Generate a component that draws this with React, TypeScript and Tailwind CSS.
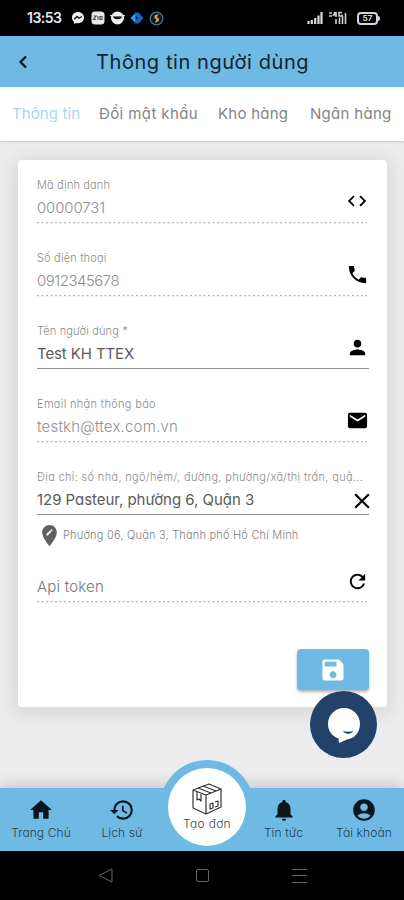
import React from 'react';
import {
    MdAccountCircle,
    MdClose,
    MdCode,
    MdEditLocation,
    MdEmail,
    MdHistory,
    MdHome,
    MdNotifications,
    MdPerson,
    MdPhone,
    MdRefresh,
    MdSave,
} from 'react-icons/md';

interface FieldProps {
    label?: string;
    labelClass?: string;
    value: string;
    valueClass?: string;
    icon: React.ReactNode;
    editable?: boolean;
    className?: string;
}

const StatusBar = () => (
    <div className="h-9 shrink-0 bg-black flex items-center text-white">
        <span className="ml-[27px] w-[35px] whitespace-nowrap text-[14px] leading-none font-semibold tracking-[-0.5px] text-gray-200">13:53</span>
        <svg className="ml-[9px]" width="14" height="14" viewBox="0 0 14 14">
            <path d="M7 1C3.400 1 1 3.400 1 6.600c0 1.800.8 3.300 2 4.300V13l2-1.100c.6.2 1.300.3 2 .3 3.600 0 6-2.500 6-5.600S10.600 1 7 1z" fill="#eee" />
            <path d="M3.300 8.300L6 5.500l2 1.700 2.700-1.700" stroke="#111" strokeWidth="1.300" fill="none" />
        </svg>
        <svg className="ml-[6px]" width="14" height="14" viewBox="0 0 14 14">
            <rect x="0.500" y="0.500" width="13" height="13" rx="3.500" fill="#e8e8e8" />
            <path d="M2.500 5H5L2.500 8.500H5M7 5v3.800M9 5.500h2v3H9z" stroke="#555" strokeWidth="1.200" fill="none" />
        </svg>
        <svg className="ml-[5px]" width="15" height="14" viewBox="0 0 15 14">
            <circle cx="7.500" cy="7" r="6.500" fill="#eee" />
            <path d="M3 5.200h9c0 2-1.800 3-4.500 3S3 7.200 3 5.200z" fill="#111" />
            <rect x="0" y="4" width="15" height="1.300" rx=".6" fill="#eee" />
        </svg>
        <svg className="ml-[5px]" width="14" height="14" viewBox="0 0 14 14">
            <path d="M4.500 1.500L8.500 1.500l5 5.500-5 5.500h-4z" fill="#1467c8" />
            <path d="M.500 7l4-4L8 7l-3.500 4z" fill="#2ba2ef" />
            <path d="M5.500 4.500L8.500 7l-3 2.500z" fill="#062044" />
        </svg>
        <svg className="ml-[5px]" width="15" height="15" viewBox="0 0 15 15">
            <circle cx="7.500" cy="7.500" r="6.300" fill="#101820" stroke="#3f7893" strokeWidth="1.300" />
            <path d="M9.500 3L5.500 4.500v3.300h2L6 12l3.800-2V6.800h-2z" fill="#d9a83b" />
        </svg>
        <svg className="ml-auto" width="16" height="13" viewBox="0 0 16 13">
            <path d="M1.500 9v3M4.800 8v4M8.200 6v6M11.500 3.500V12M14.500 0v12" stroke="#ddd" strokeWidth="2.200" />
        </svg>
        <svg className="ml-[5px]" width="20" height="14" viewBox="0 0 20 14">
            <path d="M1 2h3M1 5h3M7 1L5.500 4H9M8 1v5M14 1.500h-3V5h3V3.500M8 8v5M11.500 6.500V13M14.500 5v8M17.500 2v11" stroke="#d0d0d0" strokeWidth="1.600" fill="none" />
        </svg>
        <div className="relative ml-[9px] mr-[26px] flex h-[13px] w-[21px] items-center justify-center rounded-[4px] border-2 border-gray-300 text-[8px] font-bold leading-none text-gray-300">
            57
            <span className="absolute -right-[4px] top-[2px] h-[5px] w-[2px] rounded-r bg-gray-300" />
        </div>
    </div>
);

const Field = ({ label, labelClass = 'tracking-[0.14px]', value, valueClass = '', icon, editable = false, className = '' }: FieldProps) => (
    <div className={`flex h-[45px] shrink-0 flex-col ${editable ? 'border-b border-[#929292]' : ''} ${className}`}>
        <div className={`h-[15px] whitespace-nowrap text-[11px] font-light leading-[15px] text-[#8c8c8c] ${labelClass}`}>{label}</div>
        <div className="flex h-[29px] justify-between">
            <span className={`whitespace-nowrap text-[15px] leading-[30px] ${editable ? 'text-[#5a5a5a]' : 'font-light text-[#8f8f8f]'} ${valueClass}`}>{value}</span>
            <span className="text-black">{icon}</span>
        </div>
        {!editable && (
            <svg className="h-[2px] w-full shrink-0" width="331" height="2">
                <path d="M0 .500H330" stroke="#b5b5b5" strokeWidth="1.300" strokeDasharray="2 2.500" />
            </svg>
        )}
    </div>
);

const NavItem = ({ label, icon, className }: { label: string; icon: React.ReactNode; className: string }) => (
    <div className={`flex flex-col items-center pt-[9px] text-[#0b151c] ${className}`}>
        {icon}
        <span className="mt-px whitespace-nowrap text-[12px] font-light leading-[18px] tracking-[0.1px] text-[#1f3e50]">{label}</span>
    </div>
);

const BoxIcon = () => (
    <svg width="32" height="34" viewBox="0 0 32 34" fill="none" stroke="#333" strokeWidth="1.200" strokeLinejoin="round">
        <path d="M2 8L18 2l12 5v18L15 32 2 26zM2 8l13 5 15-6M15 13v19" />
        <path d="M7 6l13 5M12 4l13 5M6 10v8l2-1 2 2v-7" />
        <path d="M19 22l3-1v5l-3 1zM24 20l3-1v5l-3 1" />
    </svg>
);

export default function App() {
    return (
        <div className="flex h-[900px] w-[404px] flex-col overflow-hidden bg-[#ededed] font-['Inter','Noto_Sans',sans-serif] [font-feature-settings:'cv11']">
            <StatusBar />

            <header className="flex h-[51px] shrink-0 items-center bg-[#6ebae5] text-[#10222e]">
                <svg className="ml-[18px]" width="10" height="14" viewBox="0 0 10 14">
                    <path d="M8 1.500L2.500 7 8 12.500" stroke="#071016" strokeWidth="2.200" fill="none" />
                </svg>
                <h1 className="ml-[68px] whitespace-nowrap text-[20px] tracking-[0.58px]">Thông tin người dùng</h1>
            </header>

            <nav className="z-10 flex h-[54px] shrink-0 items-center bg-white pl-3 pt-px text-[15px] text-[#858585] shadow-[0_1px_2px_rgba(0,0,0,0.18)]">
                <span className="w-[87px] whitespace-nowrap tracking-[0.1px] text-[#a9d6ee]">Thông tin</span>
                <span className="w-[119px] whitespace-nowrap tracking-[0.4px]">Đổi mật khẩu</span>
                <span className="w-[92px] whitespace-nowrap tracking-[0.25px]">Kho hàng</span>
                <span className="whitespace-nowrap tracking-[0.3px]">Ngân hàng</span>
            </nav>

            <main className="flex min-h-0 flex-1 flex-col">
                <section className="ml-[18px] mr-[17px] mt-[19px] flex h-[547px] shrink-0 flex-col rounded-[4px] bg-white pl-[19px] pr-[18px] pt-[18px] shadow-[0_3px_18px_5px_rgba(0,0,0,0.09)]">
                    <Field label="Mã định danh" value="00000731" valueClass="tracking-[-0.15px]" icon={<MdCode className="-mt-[3px] mr-[1px] h-[22px] w-[22px]" />} />
                    <Field className="mt-7" label="Số điện thoại" value="0912345678" valueClass="tracking-[-0.5px]" icon={<MdPhone className="-mt-[3px] h-[23px] w-[23px]" />} />
                    <Field className="mt-7" label="Tên người dùng *" value="Test KH TTEX" valueClass="tracking-[-0.1px]" editable icon={<MdPerson className="-mt-[3px] h-[23px] w-[23px]" />} />
                    <Field className="mt-7" label="Email nhận thông báo" labelClass="tracking-[0.33px]" value="testkh@ttex.com.vn" valueClass="tracking-[0.2px]" icon={<MdEmail className="-mt-[3px] h-[23px] w-[23px]" />} />
                    <Field
                        className="mt-7"
                        label="Địa chỉ: số nhà, ngõ/hẻm/, đường, phường/xã/thị trấn, quậ..."
                        labelClass="tracking-[0.33px]"
                        value="129 Pasteur, phường 6, Quận 3"
                        valueClass="tracking-[-0.04px]"
                        editable
                        icon={<MdClose className="-mr-[6px] mt-[3px] h-[26px] w-[26px]" />}
                    />
                    <div className="flex h-[43px] shrink-0 items-start pl-px pt-[8px]">
                        <MdEditLocation className="-ml-px mr-px h-[25px] w-[25px] text-[#606060]" />
                        <span className="whitespace-nowrap text-[11px] font-light leading-[25px] tracking-[0.2px] text-[#808080]">Phường 06, Quận 3, Thành phố Hồ Chí Minh</span>
                    </div>
                    <Field value="Api token" valueClass="text-[#777] tracking-[0.2px]" icon={<MdRefresh className="-mt-[2px] h-[23px] w-[23px]" />} />

                    <button className="mt-[46px] flex h-[41px] w-[72px] shrink-0 items-center justify-center self-end rounded-[4px] bg-[#6ebae5] text-white shadow-[0_2px_3px_rgba(0,0,0,0.3)]">
                        <MdSave className="h-[28px] w-[28px]" />
                    </button>
                </section>
            </main>

            {/* Floating chat launcher */}
            <button className="absolute left-[310px] top-[691px] z-20 flex h-[67px] w-[67px] items-center justify-center rounded-full bg-[#22426a]">
                <svg width="34" height="36" viewBox="0 0 34 36">
                    <path d="M17 1C8 1 1 8 1 17c0 7 4 12 10.500 14.500l.5 4.500 8-3.500c8-1 13-8 13-15.500C33 8 26 1 17 1z" fill="#fff" />
                    <path d="M15.500 24q5.500 1.500 11 0-5 6-11 0z" fill="#22426a" />
                </svg>
            </button>

            <footer className="relative z-10 flex h-[63px] shrink-0 bg-[#6ebae5] shadow-[0_-3px_14px_rgba(0,0,0,0.17)]">
                <NavItem className="w-[82px]" label="Trang Chủ" icon={<MdHome className="h-[26px] w-[26px]" />} />
                <NavItem className="w-[80px]" label="Lịch sử" icon={<MdHistory className="h-[26px] w-[26px]" />} />
                <div className="w-[81px]">
                    <div className="absolute left-[160px] top-[-28px] h-[91px] w-[94px] overflow-hidden">
                        <div className="h-[94px] w-[94px] rounded-full bg-[#6ebae5] p-[8px]">
                            <div className="flex h-[78px] w-[78px] flex-col items-center rounded-full bg-white pt-[14px]">
                                <BoxIcon />
                                <span className="mt-px whitespace-nowrap text-[12px] font-light leading-[14px] tracking-[0.3px] text-[#444]">Tạo đơn</span>
                            </div>
                        </div>
                    </div>
                </div>
                <NavItem className="w-[81px]" label="Tin tức" icon={<MdNotifications className="h-[26px] w-[26px]" />} />
                <NavItem className="w-[80px]" label="Tài khoản" icon={<MdAccountCircle className="h-[26px] w-[26px]" />} />
            </footer>

            {/* Android navigation buttons */}
            <div className="relative z-10 flex h-[49px] shrink-0 items-center bg-black pl-[98px]">
                <svg width="15" height="15" viewBox="0 0 15 15">
                    <path d="M14 1v13L1 7.500z" stroke="#666" fill="none" />
                </svg>
                <div className="ml-[83px] h-[13px] w-[13px] rounded-[2px] border border-[#666]" />
                <div className="ml-[83px] flex h-[14px] w-[15px] flex-col justify-between">
                    <span className="h-px bg-[#666]" />
                    <span className="h-px bg-[#666]" />
                    <span className="h-px bg-[#666]" />
                </div>
            </div>
        </div>
    );
}
